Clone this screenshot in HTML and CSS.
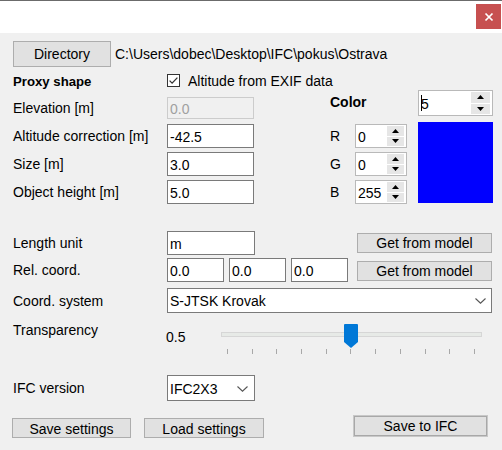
FILE: index.html
```html
<!DOCTYPE html>
<html>
<head>
<meta charset="utf-8">
<link rel="stylesheet" href="styles.css">
</head>
<body>
<div class="titlebar">
  <div class="close"><svg width="10" height="10" viewBox="0 0 10 10"><path d="M1.5 1.5L8.5 8.5M8.5 1.5L1.5 8.5" stroke="#fff" stroke-width="1.7"/></svg></div>
</div>
<div class="content">
  <div class="dir-row">
    <button class="btn btn-dir">Directory</button>
    <span class="path">C:\Users\dobec\Desktop\IFC\pokus\Ostrava</span>
  </div>

  <div class="proxy">
    <div class="proxy-title">Proxy shape</div>
    <div class="check-wrap">
      <svg class="checkbox" width="13" height="13" viewBox="0 0 13 13"><rect x="0.5" y="0.5" width="12" height="12" fill="#fff" stroke="#333"/><path d="M2.6 6.6L5.1 9.1L10.4 3.6" fill="none" stroke="#333" stroke-width="1.3"/></svg>
      <span>Altitude from EXIF data</span>
    </div>

    <div class="lbl c1 r2 elev-lbl">Elevation [m]</div>
    <div class="tb disabled c2 r2 elev">0.0</div>
    <div class="color-lbl">Color</div>
    <div class="spin spin-color">
      <div class="spin-txt"><i class="caret"></i>5</div>
      <div class="spin-btns"><div class="sb"><svg width="7" height="4" viewBox="0 0 7 4"><path d="M0 4L3.5 0L7 4Z"/></svg></div><div class="sb"><svg width="7" height="4" viewBox="0 0 7 4"><path d="M0 0L3.5 4L7 0Z"/></svg></div></div>
    </div>

    <div class="lbl c1 r3">Altitude correction [m]</div>
    <div class="tb c2 r3">-42.5</div>
    <div class="lbl c4 r3">R</div>
    <div class="spin c5 r3">
      <div class="spin-txt">0</div>
      <div class="spin-btns"><div class="sb"><svg width="7" height="4" viewBox="0 0 7 4"><path d="M0 4L3.5 0L7 4Z"/></svg></div><div class="sb"><svg width="7" height="4" viewBox="0 0 7 4"><path d="M0 0L3.5 4L7 0Z"/></svg></div></div>
    </div>

    <div class="lbl c1 r4">Size [m]</div>
    <div class="tb c2 r4">3.0</div>
    <div class="lbl c4 r4">G</div>
    <div class="spin c5 r4">
      <div class="spin-txt">0</div>
      <div class="spin-btns"><div class="sb"><svg width="7" height="4" viewBox="0 0 7 4"><path d="M0 4L3.5 0L7 4Z"/></svg></div><div class="sb"><svg width="7" height="4" viewBox="0 0 7 4"><path d="M0 0L3.5 4L7 0Z"/></svg></div></div>
    </div>

    <div class="lbl c1 r5">Object height [m]</div>
    <div class="tb c2 r5">5.0</div>
    <div class="lbl c4 r5">B</div>
    <div class="spin c5 r5">
      <div class="spin-txt">255</div>
      <div class="spin-btns"><div class="sb"><svg width="7" height="4" viewBox="0 0 7 4"><path d="M0 4L3.5 0L7 4Z"/></svg></div><div class="sb"><svg width="7" height="4" viewBox="0 0 7 4"><path d="M0 0L3.5 4L7 0Z"/></svg></div></div>
    </div>

    <div class="swatch"></div>
  </div>

  <div class="row row-lu">
    <div class="lbl rl">Length unit</div>
    <div class="tb w88">m</div>
    <button class="btn btn-get">Get from model</button>
  </div>

  <div class="row row-rc">
    <div class="lbl rl">Rel. coord.</div>
    <div class="tb w57">0.0</div>
    <div class="tb w57 ml5">0.0</div>
    <div class="tb w57 ml5">0.0</div>
    <button class="btn btn-get">Get from model</button>
  </div>

  <div class="row row-cs">
    <div class="lbl rl">Coord. system</div>
    <div class="combo w325"><span>S-JTSK Krovak</span><svg width="11" height="6" viewBox="0 0 11 6"><path d="M0.5 0.5L5.5 5.2L10.5 0.5" fill="none" stroke="#555" stroke-width="1.1"/></svg></div>
  </div>

  <div class="row row-t">
    <div class="lbl rl lbl-t">Transparency</div>
    <div class="tval">0.5</div>
    <div class="slider">
      <div class="track"></div>
      <svg class="thumb" width="14" height="24" viewBox="0 0 14 24"><path d="M1 0H13A1 1 0 0 1 14 1V18L7 24L0 18V1A1 1 0 0 1 1 0Z" fill="#0078d7"/></svg>
      <div class="ticks"><i></i><i></i><i></i><i></i><i></i><i></i><i></i><i></i><i></i><i></i><i></i></div>
    </div>
  </div>

  <div class="row row-ifc">
    <div class="lbl rl">IFC version</div>
    <div class="combo w88 ifc"><span>IFC2X3</span><svg width="11" height="6" viewBox="0 0 11 6"><path d="M0.5 0.5L5.5 5.2L10.5 0.5" fill="none" stroke="#555" stroke-width="1.1"/></svg></div>
  </div>

  <div class="row row-btns">
    <button class="btn btn-set">Save settings</button>
    <button class="btn btn-set btn-load">Load settings</button>
    <button class="btn btn-ifc">Save to IFC</button>
  </div>
</div>
</body>
</html>
```

FILE: styles.css
```css
* { box-sizing: border-box; }
html, body { margin: 0; padding: 0; }
body {
  width: 502px;
  height: 450px;
  overflow: hidden;
  background: #f0f0f0;
  font-family: "Liberation Sans", Arial, sans-serif;
  font-size: 14px;
  line-height: 16px;
  color: #000;
}
.titlebar {
  height: 33px;
  background: #fff;
  border-top: 1px solid #6b6b6b;
  display: flex;
  justify-content: flex-end;
  padding: 3px 1px 0 0;
}
.close {
  width: 25px;
  height: 25px;
  background: #c75050;
  display: flex;
  align-items: center;
  justify-content: center;
}
.content { padding-left: 13px; }

.btn {
  font-family: inherit;
  font-size: 14px;
  line-height: 16px;
  color: #000;
  background: #e1e1e1;
  border: 1px solid #adadad;
  border-radius: 0;
  padding: 0;
  margin: 0;
  display: flex;
  align-items: center;
  justify-content: center;
  overflow: hidden;
}
.dir-row {
  display: flex;
  align-items: center;
  margin-top: 8px;
  height: 26px;
}
.btn-dir { width: 98px; height: 26px; }
.path { margin-left: 4px; }

.proxy {
  display: grid;
  grid-template-columns: 154px 87px 76px 25px 52px 11px 75px;
  grid-template-rows: 13px 30px 24px 24px 24px;
  row-gap: 4px;
  margin-top: 6px;
}
.c1 { grid-column: 1; }
.c2 { grid-column: 2; }
.c4 { grid-column: 4; }
.c5 { grid-column: 5; }
.r2 { grid-row: 2; }
.r3 { grid-row: 3; }
.r4 { grid-row: 4; }
.r5 { grid-row: 5; }

.proxy-title {
  grid-column: 1;
  grid-row: 1;
  font-weight: bold;
  font-size: 13.2px;
  height: 16px;
  margin-top: 1px;
  white-space: nowrap;
}
.check-wrap {
  grid-column: 2 / span 6;
  grid-row: 1;
  display: flex;
  align-items: center;
  gap: 8px;
  height: 13px;
  margin-top: 1px;
  white-space: nowrap;
}
.checkbox { flex: none; display: block; }

.lbl {
  display: flex;
  align-items: center;
  white-space: nowrap;
}
.elev-lbl { align-self: end; height: 22px; margin-bottom: 1px; }

.tb {
  height: 24px;
  border: 1px solid #7a7a7a;
  background: #fff;
  padding: 2px 0 0 2px;
  display: flex;
  align-items: center;
  white-space: nowrap;
  overflow: hidden;
}
.tb.disabled {
  background: #f0f0f0;
  border-color: #cccccc;
  color: #a0a0a0;
}
.elev { align-self: end; height: 22px; margin-bottom: 1px; }

.color-lbl {
  grid-column: 4 / span 2;
  grid-row: 2;
  align-self: start;
  margin-top: 4px;
  font-weight: bold;
}

.spin {
  height: 24px;
  border: 1px solid #b9b9b9;
  background: #fff;
  display: flex;
}
.spin-txt {
  flex: 1;
  padding: 2px 0 0 2px;
  display: flex;
  align-items: center;
  overflow: hidden;
}
.spin-btns {
  width: 17px;
  margin: 1px 2px 1px 0;
  display: flex;
  flex-direction: column;
  gap: 1px;
}
.sb {
  flex: 1;
  background: #e6e6e6;
  display: flex;
  align-items: center;
  justify-content: center;
}
.sb svg { display: block; fill: #000; }
.spin-color {
  grid-column: 7;
  grid-row: 2;
  align-self: start;
  height: 26px;
}
.spin-color .spin-btns { width: 19px; }
.caret {
  display: inline-block;
  width: 1px;
  height: 16px;
  background: #000;
  margin-right: -1px;
  margin-top: -2px;
}

.swatch {
  grid-column: 7;
  grid-row: 3 / span 3;
  align-self: start;
  margin-top: -2px;
  height: 81px;
  background: #0000ff;
}

.row {
  display: flex;
  align-items: center;
}
.rl { width: 154px; flex: none; }
.w88 { width: 88px; flex: none; }
.w57 { width: 57px; flex: none; }
.w325 { width: 325px; flex: none; }
.ml5 { margin-left: 5px; }

.row-lu { margin-top: 27px; height: 24px; }
.row-rc { margin-top: 3px; height: 24px; }
.btn-get {
  width: 135px;
  height: 20px;
  margin-left: auto;
  margin-right: 10px;
}
.row-rc .btn-get { margin-top: 1px; }

.row-cs { margin-top: 6px; height: 25px; }
.combo {
  height: 25px;
  border: 1px solid #7a7a7a;
  background: #fff;
  display: flex;
  align-items: center;
  justify-content: space-between;
  padding: 1px 5px 0 2px;
  white-space: nowrap;
}
.combo svg { display: block; flex: none; }
.ifc { height: 26px; padding-right: 6px; }

.row-t {
  margin-top: 9px;
  height: 32px;
  align-items: flex-start;
}
.tval {
  width: 55px;
  flex: none;
  margin-left: -1px;
  margin-top: 7px;
}
.slider {
  width: 261px;
  height: 32px;
  position: relative;
}
.track {
  margin-top: 10px;
  height: 5px;
  background: #e7eae7;
  border: 1px solid #d6d6d6;
}
.thumb {
  position: absolute;
  left: 123px;
  top: 2px;
  display: block;
}
.ticks {
  display: flex;
  justify-content: space-between;
  margin-top: 12px;
  padding: 0 7px 0 6px;
}
.ticks i {
  display: block;
  width: 1px;
  height: 5px;
  background: #a8a8a8;
}

.row-ifc { margin-top: 21px; height: 26px; }

.row-btns {
  margin-top: 14px;
  margin-left: -1px;
  align-items: flex-start;
}
.btn-set {
  width: 119px;
  height: 20px;
  margin-top: 3px;
  align-items: flex-start;
  padding-top: 2px;
}
.btn-load { width: 120px; margin-left: 13px; }
.btn-ifc {
  width: 135px;
  height: 22px;
  margin-left: 89px;
  border-color: #c8c8c8;
  box-shadow: inset 0 0 0 1px #a8a8a8;
}
```
